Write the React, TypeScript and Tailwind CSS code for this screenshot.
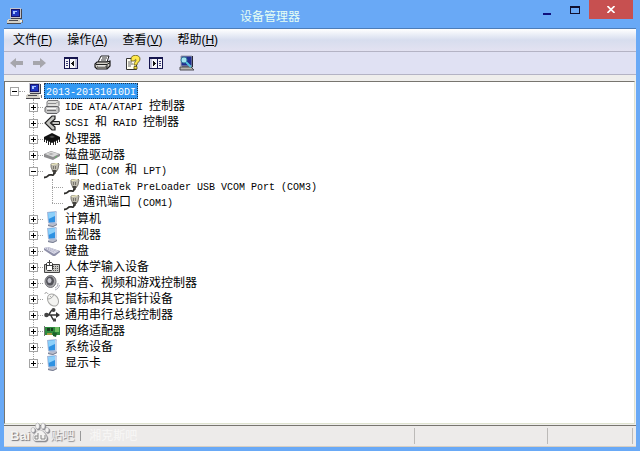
import type { ReactNode } from 'react'

type Device = { label: string; icon: ReactNode; children?: Device[] }

const ComputerIcon = () => (
  <svg width="16" height="16" viewBox="0 0 16 16" shapeRendering="crispEdges" className="shrink-0">
    <path d="M3 0h11v10H3z" fill="#c4c4cc" />
    <path d="M4 1h9v8H4z" fill="#14146c" />
    <path d="M5 2h7v6H5z" fill="#2038c0" />
    <path d="M6 3h4v1H6zM6 4h2v2H6z" fill="#a8c4ff" />
    <path d="M14 1h1v10h-1zM4 10h10v1H4z" fill="#45454d" />
    <path d="M1 11h11l2 2v2H0v-2z" fill="#d4d1c8" />
    <path d="M2 12h9v1H2zM0 15h14v1H0z" fill="#4b4a50" />
    <path d="M13 12h2v2h-2z" fill="#f0ede2" />
    <path d="M15 12h1v3h-1z" fill="#77767c" />
  </svg>
)

const MonitorIcon = () => (
  <svg width="16" height="16" viewBox="0 0 16 16" className="shrink-0">
    <path d="M4 13l4-2 5 1v2l-4 2-5-1z" fill="#b9bdcc" />
    <path d="M3 1l9-1 1 1v10l-3 2-6-1z" fill="#a6b8d8" />
    <path d="M4 2l7-1v10l-6 .500z" fill="#2e91e2" />
    <path d="M4 2l7-1v4L4.500 8z" fill="#8dd0fa" />
    <path d="M11 1l2 .500v9.500l-2 1z" fill="#c4d2ea" />
    <path d="M4 14.500l5 1 4-2" stroke="#777d91" fill="none" />
  </svg>
)

const PortIcon = () => (
  <svg width="16" height="16" viewBox="0 0 16 16" className="shrink-0">
    <path d="M7 1l7-1 1 1-1 5-2 3H9L7 4z" fill="#bdbaae" stroke="#68655c" strokeWidth=".8" />
    <path d="M7 1l6-1 1 1-6 1z" fill="#f7f3c4" />
    <path d="M8.500 7h4l-1 4h-2z" fill="#44423e" />
    <path d="M10 10c0 4-3 1-5 2-1 1-2 2.500-5 2.500" stroke="#2e2d2a" strokeWidth="1.800" fill="none" />
    <path d="M9.500 3v3M11.500 3v3" stroke="#77746b" />
  </svg>
)

const IdeIcon = () => (
  <svg width="16" height="16" viewBox="0 0 16 16" className="shrink-0">
    <path d="M4 1.500h10l1 1v4l-2 2H3V3z" fill="#dededc" stroke="#77777a" />
    <path d="M4 4.500h8l2-2" stroke="#8b8b8c" fill="none" />
    <path d="M2 7.500h11l2 1v4l-2 2H3l-2-2V9z" fill="#c7c7c7" stroke="#606063" />
    <path d="M3 9.500h9" stroke="#f8f8f8" />
    <path d="M3 11.500h9" stroke="#707070" />
  </svg>
)

const ScsiIcon = () => (
  <svg width="16" height="16" viewBox="0 0 16 16" className="shrink-0">
    <path d="M11 1H8L1 8l7 7h3v-3L6.500 8 11 4z" fill="#c4c4c0" stroke="#222" strokeWidth="1.200" />
    <path d="M8 6.500h7.500v3H8z" fill="#c4c4c0" stroke="#222" />
  </svg>
)

const CpuIcon = () => (
  <svg width="16" height="16" viewBox="0 0 16 16" className="shrink-0">
    <path d="M0 6l8-4 8 4v2l-8 4-8-4z" fill="#111" />
    <path d="M.5 8v3M2.500 9v3M4.500 10v4M6.500 11v3M9.500 11v3M11.500 10v4M13.500 9v3M15.500 8v3" stroke="#222" />
    <path d="M5 6l3-1.500 3 1.500-3 1z" fill="#4c4c4c" />
  </svg>
)

const DiskIcon = () => (
  <svg width="16" height="16" viewBox="0 0 16 16" className="shrink-0">
    <path d="M0 7l7-3 9 3v2l-7 4-9-3z" fill="#8d8d8f" />
    <path d="M1 7l6-2.500L15 7l-6 3z" fill="#dadada" />
    <path d="M4 7l3-1 3 1-3 1z" fill="#aaa" />
    <path d="M11 10.500l2-1" stroke="#62b562" />
  </svg>
)

const KeyboardIcon = () => (
  <svg width="16" height="16" viewBox="0 0 16 16" className="shrink-0">
    <path d="M0 5l4-1 12 4v1l-5 4H9L0 7z" fill="#8e8fa8" />
    <path d="M0 5l4-1 11 4-5 3z" fill="#dcdcea" />
    <path d="M2 5.500l9 4M4 5l9 3.500" stroke="#9e9fb7" strokeDasharray="1 1" />
  </svg>
)

const HidIcon = () => (
  <svg width="16" height="16" viewBox="0 0 16 16" className="shrink-0">
    <path d="M.5 5.500h15v8H.5z" fill="#c9c9c6" stroke="#444" />
    <path d="M9 7.500h6M9 9.500h6M9 11.500h6" stroke="#555" strokeDasharray="1 1" />
    <path d="M2.500 4.500l1-1h4l1 1v6l-1 1h-4l-1-1z" fill="#fff" stroke="#333" />
    <path d="M3 6.500h5M5.500 1v5" stroke="#444" />
  </svg>
)

const SpeakerIcon = () => (
  <svg width="16" height="16" viewBox="0 0 16 16" className="shrink-0">
    <ellipse cx="6.500" cy="6.500" rx="5.500" ry="6" fill="#a9a9ad" stroke="#6f6f74" />
    <ellipse cx="6" cy="6" rx="4" ry="4.500" fill="#54545b" />
    <ellipse cx="5.500" cy="5.500" rx="2" ry="2.500" fill="#c4c4cd" />
    <path d="M11 13c2-1 3-2 3-5M11 15c3-1 4-3 4.500-5" stroke="#aaaab6" fill="none" />
  </svg>
)

const MouseIcon = () => (
  <svg width="16" height="16" viewBox="0 0 16 16" className="shrink-0">
    <path d="M4 3C3 1 1 1 1 3" stroke="#999" fill="none" />
    <ellipse cx="9" cy="9" rx="5" ry="6.500" transform="rotate(-35 9 9)" fill="#f3f3f1" stroke="#a5a5a3" />
    <path d="M4 8c3 0 5-2 6-5M6 5l2 2" stroke="#aaa" fill="none" />
  </svg>
)

const UsbIcon = () => (
  <svg width="16" height="16" viewBox="0 0 16 16" className="shrink-0">
    <path d="M2 8h11M4 8c2 0 2-5 5-5h1M6 8c2 0 2 5 4 5h1" stroke="#333" strokeWidth="1.500" fill="none" />
    <circle cx="2.500" cy="8" r="2.300" fill="#444" />
    <path d="M12 5l4 3-4 3z" fill="#333" />
    <circle cx="9.500" cy="3" r="2" fill="#444" />
    <path d="M9 11.500h3v3H9z" fill="#444" />
  </svg>
)

const NetworkIcon = () => (
  <svg width="16" height="16" viewBox="0 0 16 16" className="shrink-0">
    <path d="M1 4h15v8H1z" fill="#2d8a3c" />
    <path d="M0 3h1v10H0z" fill="#777" />
    <path d="M3 5h3v3H3zM7 5h2v3H7z" fill="#173f1f" />
    <path d="M11 4h4v5h-4z" fill="#70bd62" />
    <path d="M3 10h5v2H3z" fill="#a5983f" />
    <path d="M9 9l4 1-1 4-3-1z" fill="#1d602b" />
  </svg>
)

const devices: Device[] = [
  { label: 'IDE ATA/ATAPI 控制器', icon: <IdeIcon /> },
  { label: 'SCSI 和 RAID 控制器', icon: <ScsiIcon /> },
  { label: '处理器', icon: <CpuIcon /> },
  { label: '磁盘驱动器', icon: <DiskIcon /> },
  {
    label: '端口 (COM 和 LPT)',
    icon: <PortIcon />,
    children: [
      { label: 'MediaTek PreLoader USB VCOM Port (COM3)', icon: <PortIcon /> },
      { label: '通讯端口 (COM1)', icon: <PortIcon /> },
    ],
  },
  { label: '计算机', icon: <MonitorIcon /> },
  { label: '监视器', icon: <MonitorIcon /> },
  { label: '键盘', icon: <KeyboardIcon /> },
  { label: '人体学输入设备', icon: <HidIcon /> },
  { label: '声音、视频和游戏控制器', icon: <SpeakerIcon /> },
  { label: '鼠标和其它指针设备', icon: <MouseIcon /> },
  { label: '通用串行总线控制器', icon: <UsbIcon /> },
  { label: '网络适配器', icon: <NetworkIcon /> },
  { label: '系统设备', icon: <MonitorIcon /> },
  { label: '显示卡', icon: <MonitorIcon /> },
]

const menus = [
  { text: '文件', hotkey: 'F' },
  { text: '操作', hotkey: 'A' },
  { text: '查看', hotkey: 'V' },
  { text: '帮助', hotkey: 'H' },
]

// Latin runs are half the width of a Chinese character
function Label({ text }: { text: string }) {
  return (
    <span className="whitespace-pre px-px">
      {text.split(/([\x20-\x7e]+)/).map((part, i) =>
        i % 2 ? (
          <span key={i} className="font-['Liberation_Mono','Noto_Sans_CJK_SC',monospace] text-[10px]">{part}</span>
        ) : part
      )}
    </span>
  )
}

function Expander({ open, name }: { open?: boolean; name: string }) {
  return (
    <button aria-label={name} aria-expanded={!!open} className="relative z-10 size-[9px] shrink-0 border border-[#a4a4a4] bg-white">
      <svg width="7" height="7" viewBox="0 0 7 7" shapeRendering="crispEdges" className="block">
        <path d={open ? 'M1 3h5v1H1z' : 'M1 3h5v1H1zM3 1h1v5H3z'} fill="#000" />
      </svg>
    </button>
  )
}

function Tree() {
  return (
    <ul className="pl-px text-[12px] leading-4 text-black">
      <li>
        <div className="flex h-4 items-center pl-1">
          <Expander open name="2013-20131010DI" />
          <span className="mr-px w-1.5 border-t border-dotted border-[#a0a0a0]" />
          <ComputerIcon />
          <span className="ml-0.5 h-4 border border-dotted border-[#1c3450] bg-[#3399f3] leading-[14px] text-white">
            <Label text="2013-20131010DI" />
          </span>
        </div>
        <ul className="relative">
          <li aria-hidden="true" className="absolute top-0 bottom-2 left-[27px] border-l border-dotted border-[#a0a0a0]" />
          {devices.map(({ label, icon, children }) => (
            <li key={label}>
              <div className="flex h-4 items-center pl-[23px]">
                <Expander open={!!children} name={label} />
                <span className="mr-px w-[5px] border-t border-dotted border-[#a0a0a0]" />
                {icon}
                <span className="ml-1"><Label text={label} /></span>
              </div>
              {children && (
                <ul className="relative">
                  <li aria-hidden="true" className="absolute top-0 bottom-2 left-[46px] border-l border-dotted border-[#a0a0a0]" />
                  {children.map(child => (
                    <li key={child.label} className="flex h-4 items-center pl-[46px]">
                      <span className="mr-px w-[11px] border-t border-dotted border-[#a0a0a0]" />
                      {child.icon}
                      <span className="ml-0.5"><Label text={child.label} /></span>
                    </li>
                  ))}
                </ul>
              )}
            </li>
          ))}
        </ul>
      </li>
    </ul>
  )
}

function Toolbar() {
  return (
    <div className="flex h-[23px] items-center border-b border-[#b4b3c4] bg-[#e0e1f3] pl-1.5">
      <button aria-label="后退">
        <svg width="13" height="12" viewBox="0 0 13 12"><path d="M0 6l6-5v3h7v4H6v3z" fill="#a6a6ac" /></svg>
      </button>
      <button aria-label="前进" className="ml-2.5">
        <svg width="13" height="12" viewBox="0 0 13 12"><path d="M13 6L7 1v3H0v4h7v3z" fill="#a6a6ac" /></svg>
      </button>
      <button aria-label="显示控制台树" className="ml-[18px]">
        <svg width="14" height="12" viewBox="0 0 14 12" shapeRendering="crispEdges">
          <path d="M0 0h14v12H0z" fill="#15154e" />
          <path d="M1 2h4v9H1zM6 2h7v9H6z" fill="#f5f5f8" />
          <path d="M2 4h2v1H2zM2 6h2v1H2zM2 8h2v1H2z" fill="#3c3c77" />
          <path d="M10 4v5H9V8H8V7H7V6h1V5h1V4z" fill="#111" />
          <path d="M11 2h2v9h-2z" fill="#c4c4dc" />
        </svg>
      </button>
      <button aria-label="打印" className="ml-4">
        <svg width="17" height="16" viewBox="0 0 17 16">
          <path d="M4 7l3-6h8l-2 6z" fill="#fff" stroke="#222" />
          <path d="M8 3h5M7 5h5" stroke="#333" />
          <path d="M3 7h10l3-1v5l-3 3H3l-2-2V9z" fill="#d2cfc7" stroke="#1a1a1a" strokeWidth="1.200" />
          <path d="M2 9.500h11l3-2M3 12h10M13 10v4" stroke="#222" fill="none" />
          <path d="M4 11h7" stroke="#fff" />
        </svg>
      </button>
      <button aria-label="帮助" className="ml-3.5">
        <svg width="16" height="16" viewBox="0 0 16 16">
          <path d="M1.500 3.500h10v11h-10z" fill="#fffef0" stroke="#333" />
          <path d="M3 7h4M3 9h5M3 11h3" stroke="#666" />
          <path d="M6 4c0-5 9-5 9 0 0 3-3 3-3 6H9c0-3 2-3 2-5 0-1-1-1-1 1H6z" fill="#ffe84a" stroke="#5d5410" strokeWidth=".8" />
          <path d="M9 11.500h3v2.500H9z" fill="#ffe84a" stroke="#5d5410" strokeWidth=".8" />
        </svg>
      </button>
      <button aria-label="显示操作窗格" className="ml-2">
        <svg width="14" height="12" viewBox="0 0 14 12" shapeRendering="crispEdges">
          <path d="M0 0h14v12H0z" fill="#15154e" />
          <path d="M1 2h7v9H1zM9 2h4v9H9z" fill="#f5f5f8" />
          <path d="M10 4h2v1h-2zM10 6h2v1h-2zM10 8h2v1h-2z" fill="#3c3c77" />
          <path d="M4 4v5h1V8h1V7h1V6H6V5H5V4z" fill="#111" />
          <path d="M1 2h2v9H1z" fill="#c4c4dc" />
        </svg>
      </button>
      <button aria-label="扫描硬件改动" className="ml-4">
        <svg width="16" height="16" viewBox="0 0 16 16">
          <path d="M2 1h11v10H2z" fill="#202f91" stroke="#9a9ca8" />
          <path d="M13.500 1v11H3" stroke="#282936" fill="none" />
          <path d="M1 12h11l3 3H1z" fill="#b7b5ad" stroke="#4c4c52" />
          <circle cx="5" cy="5" r="3" fill="#a4e4ef" stroke="#367b9c" />
          <path d="M7 7l5 5" stroke="#55c3dd" strokeWidth="2" />
        </svg>
      </button>
    </div>
  )
}

const Watermark = () => (
  <div className="flex items-center pl-1.5 text-[12px] leading-4 text-[#f4f3f2] [text-shadow:1px_1px_1px_#77777c]">
    <span className="font-['Liberation_Sans',sans-serif] text-[13px] font-bold">Bai</span>
    <svg width="20" height="20" viewBox="0 0 20 20" className="-mt-2 drop-shadow-[1px_1px_0_#8a8a8f]">
      <g fill="#f4f3f2" stroke="#9a9a9e" strokeWidth=".5">
        <ellipse cx="3" cy="8" rx="2" ry="2.500" />
        <ellipse cx="7.500" cy="4" rx="2" ry="3" />
        <ellipse cx="13" cy="4" rx="2" ry="3" />
        <ellipse cx="17" cy="8" rx="2" ry="2.500" />
        <path d="M10 8c3 0 7 5 7 8 0 4-4 3-7 3s-7 1-7-3c0-3 4-8 7-8z" />
      </g>
      <path d="M8 11v6H5v-3h3M11 13v4h4v-4" stroke="#888" fill="none" />
    </svg>
    <span>贴吧</span>
    <span className="ml-1.5 h-2.5 w-px bg-[#999]" />
    <span className="ml-2 text-[#f8f7f6] [text-shadow:none]">湘克斯吧</span>
  </div>
)

export default function App() {
  return (
    <div className="flex min-h-screen flex-col bg-[#69a9f6] px-1 pb-1 font-['Liberation_Sans','Noto_Sans_CJK_SC',sans-serif]">
      <header className="flex h-7 items-start pr-[3px]">
        <div className="mt-2 ml-[3px]"><ComputerIcon /></div>
        <h1 className="mt-[9px] flex-1 pr-4 text-center text-[12px] leading-4 text-[#e6fff3]">设备管理器</h1>
        <button aria-label="最小化" className="flex h-[19px] w-7 items-end justify-center pb-1">
          <span className="h-0.5 w-2 bg-[#10107c]" />
        </button>
        <button aria-label="最大化" className="flex h-[19px] w-7 items-center justify-center">
          <span className="h-2 w-2.5 border border-t-2 border-[#101030]" />
        </button>
        <button aria-label="关闭" className="flex h-[19px] w-11 items-center justify-center bg-[#c75050]">
          <svg width="8" height="7" viewBox="0 0 8 7"><path d="M.5 0l7 7M7.500 0l-7 7" stroke="#fff" strokeWidth="1.600" /></svg>
        </button>
      </header>

      <div className="flex flex-1 flex-col border-t border-[#4d7db8] bg-[#efeeec]">
        <nav className="flex h-[23px] items-center gap-[15px] border-b border-[#b4b3c4] bg-linear-to-b from-white via-[#d7ddee] to-[#e3e2f1] pl-[9px]">
          {menus.map(({ text, hotkey }) => (
            <button key={text} className="text-[12px] leading-4 text-black">
              {text}(<u>{hotkey}</u>)
            </button>
          ))}
        </nav>
        <Toolbar />
        <main className="mt-1.5 mr-px flex-1 border-t border-r border-b border-l border-t-[#77756f] border-r-[#dfe3d0] border-b-[#dfe3d0] border-l-[#77756f] bg-white pt-px">
          <Tree />
        </main>
        <footer className="mt-px flex h-[22px] border-t border-b border-t-[#77756f] border-b-[#d7cfc4] bg-[#edebea] py-0.5 pr-[3px]">
          <div className="flex flex-1 items-center border-r border-[#bcbab8]"><Watermark /></div>
          <div className="w-[133px] border-r border-[#bcbab8]" />
          <div className="w-[85px] border-r border-[#bcbab8]" />
        </footer>
      </div>
    </div>
  )
}
